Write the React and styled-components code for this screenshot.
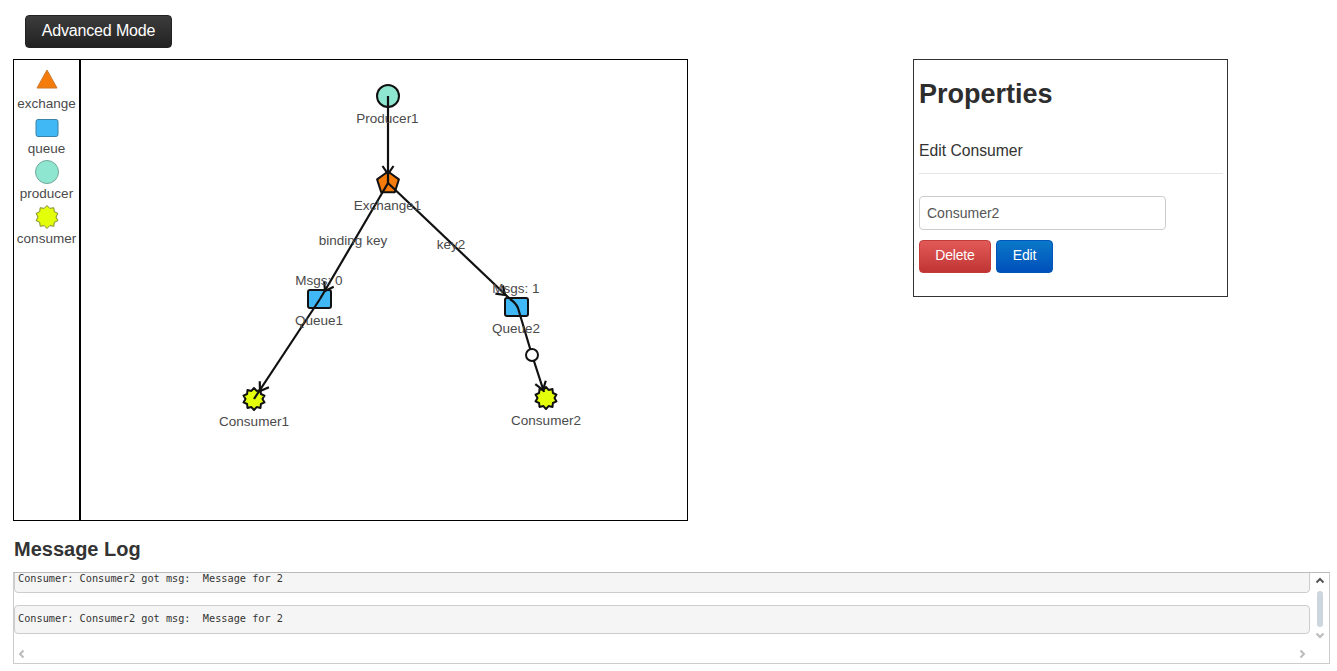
import styled, { createGlobalStyle } from "styled-components";

const GlobalStyle = createGlobalStyle`
  html, body {
    margin: 0;
    padding: 0;
    background: #fff;
    font-family: "Liberation Sans", Arial, sans-serif;
    color: #333;
  }
`;

const Page = styled.div`
  width: 1337px;
  height: 671px;
  overflow: hidden;
  padding: 15px 7px 0 13px;
  box-sizing: border-box;
`;

const ModeButton = styled.button`
  display: block;
  width: 147px;
  height: 33px;
  margin: 0 0 11px 12px;
  padding: 0 0 2px;
  border: 1px solid #222;
  border-radius: 4px;
  background: linear-gradient(to bottom, #3c3c3c, #222);
  color: #fff;
  font: 16px "Liberation Sans", Arial, sans-serif;
  letter-spacing: -0.15px;
`;

const TopRow = styled.div`
  display: flex;
  align-items: flex-start;
  gap: 225px;
`;

const Editor = styled.div`
  display: flex;
  width: 675px;
  height: 462px;
  box-sizing: border-box;
  border: 1px solid #000;
`;

const Palette = styled.div`
  display: flex;
  flex-direction: column;
  width: 67px;
  box-sizing: border-box;
  padding-top: 6px;
  border-right: 2px solid #000;
`;

const PaletteItem = styled.div`
  display: flex;
  flex-direction: column;
  align-items: center;
  gap: 5px;
  height: 45px;
`;

const PaletteIcon = styled.svg`
  display: block;
  width: 32px;
  height: 26px;
  overflow: visible;
`;

const PaletteLabel = styled.span`
  font-size: 13.5px;
  line-height: 14px;
  color: #4a4a4a;
`;

const Canvas = styled.svg`
  display: block;
  flex: 1;
  height: 460px;
`;

const NodeLabel = styled.text`
  font-family: "Liberation Sans", Arial, sans-serif;
  font-size: 13.5px;
  fill: #4a4a4a;
  text-anchor: middle;
`;

const Edge = styled.path`
  fill: none;
  stroke: #111;
  stroke-width: 2.2;
`;

const Properties = styled.div`
  width: 315px;
  height: 238px;
  box-sizing: border-box;
  border: 1px solid #333;
  padding: 0 5px;
`;

const Title = styled.h1`
  margin: 19px 0 0;
  font-size: 27px;
  line-height: 31px;
  font-weight: 700;
  color: #2d2d2d;
`;

const SubTitle = styled.div`
  margin-top: 32px;
  padding-bottom: 13px;
  border-bottom: 1px solid #e6e6e6;
  font-size: 15.7px;
  line-height: 18px;
  width: 304px;
`;

const NameInput = styled.input`
  display: block;
  width: 247px;
  height: 34px;
  margin-top: 22px;
  padding: 0 7px;
  box-sizing: border-box;
  border: 1px solid #ccc;
  border-radius: 4px;
  color: #555;
  font: 14px "Liberation Sans", Arial, sans-serif;
`;

const Actions = styled.div`
  display: flex;
  gap: 5px;
  margin-top: 10px;
`;

const ActionButton = styled.button`
  height: 33px;
  width: ${({ $width }) => $width}px;
  padding: 0 0 3px;
  border: 1px solid ${({ $kind }) => ($kind === "danger" ? "#c23c3a" : "#0056b8")};
  border-radius: 4px;
  background: ${({ $kind }) =>
    $kind === "danger"
      ? "linear-gradient(to bottom, #e25a58, #c03533)"
      : "linear-gradient(to bottom, #0a78c8, #0050bb)"};
  color: #fff;
  font: 14px "Liberation Sans", Arial, sans-serif;
  letter-spacing: -0.2px;
`;

const LogTitle = styled.h2`
  margin: 17px 0 12px 1px;
  font-size: 20px;
  line-height: 22px;
  font-weight: 700;
  color: #333;
`;

const LogBox = styled.div`
  display: grid;
  grid-template-columns: 1fr 19px;
  grid-template-rows: 61px 30px;
  width: 1317px;
  height: 92px;
  box-sizing: border-box;
  border: 1px solid #ccc;
  border-top-color: #bbb;
`;

const LogLines = styled.div`
  display: flex;
  flex-direction: column;
  justify-content: flex-end;
  gap: 12px;
  overflow: hidden;
`;

const LogLine = styled.pre`
  flex: none;
  height: 29px;
  margin: 0;
  padding: 0 3px;
  box-sizing: border-box;
  border: 1px solid #ccc;
  border-radius: 4px;
  background: #f5f5f5;
  color: #333;
  font: 10.24px/${({ $lead }) => $lead}px "DejaVu Sans Mono", monospace;
`;

const LogTail = styled.div`
  grid-column: 1;
  display: flex;
  align-items: center;
  justify-content: space-between;
  padding: 10px 3px 0;
`;

const VScroll = styled.div`
  grid-column: 2;
  grid-row: 1 / span 2;
  display: flex;
  flex-direction: column;
  align-items: center;
  padding-top: 3px;
`;

const Thumb = styled.div`
  width: 6px;
  height: 36px;
  margin: 5px 0 3px;
  border-radius: 3px;
  background: #cdd5de;
`;

const ChevronIcon = styled.svg`
  display: block;
  width: 10px;
  height: 10px;
`;

const Chevron = ({ points, color }) => (
  <ChevronIcon viewBox="0 0 10 10">
    <polyline points={points} fill="none" stroke={color} strokeWidth="2" />
  </ChevronIcon>
);

// open arrow head with its tip at x,y, rotated along the edge
const ArrowHead = ({ x, y, angle }) => (
  <Edge d="M-8 -5.5 L0 0 L-8 5.5" transform={`translate(${x} ${y}) rotate(${angle})`} />
);

const starPoints = (cx, cy, outer, inner, count = 10) => {
  const pts = [];
  for (let i = 0; i < count * 2; i++) {
    const r = i % 2 === 0 ? outer : inner;
    const a = (Math.PI * i) / count - Math.PI / 2;
    pts.push(`${(cx + r * Math.cos(a)).toFixed(1)},${(cy + r * Math.sin(a)).toFixed(1)}`);
  }
  return pts.join(" ");
};

const pentagonPoints = (cx, cy, r) => {
  const pts = [];
  for (let i = 0; i < 5; i++) {
    const a = (2 * Math.PI * i) / 5 - Math.PI / 2;
    pts.push(`${(cx + r * Math.cos(a)).toFixed(1)},${(cy + r * Math.sin(a)).toFixed(1)}`);
  }
  return pts.join(" ");
};

const GraphCanvas = () => (
  <Canvas viewBox="81 60 606 460">
    <circle cx="388" cy="96" r="11" fill="#8ee6d0" stroke="#111" strokeWidth="2" />
    <polygon points={pentagonPoints(388, 183, 11.5)} fill="#f57c0a" stroke="#111" strokeWidth="2" strokeLinejoin="round" />
    <rect x="308" y="290" width="23" height="18" rx="2" fill="#3fb8f5" stroke="#111" strokeWidth="2" />
    <rect x="505" y="298" width="23" height="18" rx="2" fill="#3fb8f5" stroke="#111" strokeWidth="2" />
    <polygon points={starPoints(254, 399, 11, 8.5)} fill="#e4ff0a" stroke="#111" strokeWidth="2" strokeLinejoin="round" />
    <polygon points={starPoints(546, 398, 11, 8.5)} fill="#e4ff0a" stroke="#111" strokeWidth="2" strokeLinejoin="round" />

    <Edge d="M388 96 L388 183" />
    <ArrowHead x={388} y={174} angle={90} />
    <Edge d="M388 183 L320 299" />
    <ArrowHead x={325} y={291} angle={120} />
    <Edge d="M320 299 L254 399" />
    <ArrowHead x={260} y={391} angle={123} />
    <Edge d="M388 183 L510 299" />
    <ArrowHead x={505} y={295} angle={43} />
    <Edge d="M510 299 Q516 303 518 308 L532 355 L544 392" />
    <ArrowHead x={543} y={390} angle={72} />
    <circle cx="532" cy="355" r="6" fill="#fff" stroke="#111" strokeWidth="2" />

    <NodeLabel x="387.5" y="123">Producer1</NodeLabel>
    <NodeLabel x="387.5" y="210">Exchange1</NodeLabel>
    <NodeLabel x="353" y="245">binding key</NodeLabel>
    <NodeLabel x="451" y="249">key2</NodeLabel>
    <NodeLabel x="319" y="285">Msgs: 0</NodeLabel>
    <NodeLabel x="516" y="293">Msgs: 1</NodeLabel>
    <NodeLabel x="319" y="325">Queue1</NodeLabel>
    <NodeLabel x="516" y="333">Queue2</NodeLabel>
    <NodeLabel x="254" y="426">Consumer1</NodeLabel>
    <NodeLabel x="546" y="425">Consumer2</NodeLabel>
  </Canvas>
);

const App = () => (
  <Page>
    <GlobalStyle />
    <ModeButton>Advanced Mode</ModeButton>
    <TopRow>
      <Editor>
        <Palette>
          <PaletteItem>
            <PaletteIcon viewBox="0 0 32 26">
              <polygon points="16,4 26,22 6,22" fill="#f57c0a" stroke="#c9782e" />
            </PaletteIcon>
            <PaletteLabel>exchange</PaletteLabel>
          </PaletteItem>
          <PaletteItem>
            <PaletteIcon viewBox="0 0 32 26">
              <rect x="5" y="8.5" width="22" height="17" rx="2" fill="#3fb8f5" stroke="#3b82a8" />
            </PaletteIcon>
            <PaletteLabel>queue</PaletteLabel>
          </PaletteItem>
          <PaletteItem>
            <PaletteIcon viewBox="0 0 32 26">
              <circle cx="16" cy="16" r="11.5" fill="#8ee6d0" stroke="#72a89a" />
            </PaletteIcon>
            <PaletteLabel>producer</PaletteLabel>
          </PaletteItem>
          <PaletteItem>
            <PaletteIcon viewBox="0 0 32 26">
              <polygon points={starPoints(16, 16, 11.5, 9)} fill="#e4ff0a" stroke="#7e8a2e" strokeLinejoin="round" />
            </PaletteIcon>
            <PaletteLabel>consumer</PaletteLabel>
          </PaletteItem>
        </Palette>
        <GraphCanvas />
      </Editor>
      <Properties>
        <Title>Properties</Title>
        <SubTitle>Edit Consumer</SubTitle>
        <NameInput defaultValue="Consumer2" />
        <Actions>
          <ActionButton $kind="danger" $width={72}>Delete</ActionButton>
          <ActionButton $kind="primary" $width={57}>Edit</ActionButton>
        </Actions>
      </Properties>
    </TopRow>
    <LogTitle>Message Log</LogTitle>
    <LogBox>
      <LogLines>
        <LogLine $lead={27}>Consumer: Consumer2 got msg:  Message for 2</LogLine>
        <LogLine $lead={25}>Consumer: Consumer2 got msg:  Message for 2</LogLine>
      </LogLines>
      <VScroll>
        <Chevron points="1.5,6.5 5,3 8.5,6.5" color="#555" />
        <Thumb />
        <Chevron points="1.5,3.5 5,7 8.5,3.5" color="#bbb" />
      </VScroll>
      <LogTail>
        <Chevron points="6.5,1.5 3,5 6.5,8.5" color="#bbb" />
        <Chevron points="3.5,1.5 7,5 3.5,8.5" color="#bbb" />
      </LogTail>
    </LogBox>
  </Page>
);

export default App;
